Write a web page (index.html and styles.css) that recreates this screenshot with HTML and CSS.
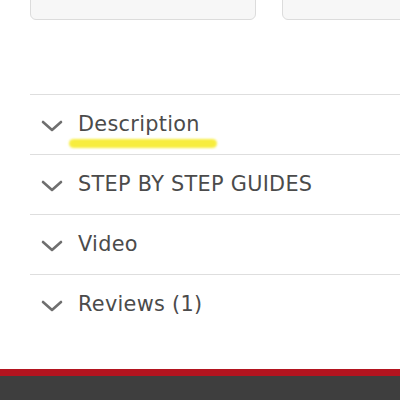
FILE: index.html
```html
<!DOCTYPE html>
<html lang="en">
<head>
<meta charset="utf-8">
<title>Product tabs</title>
<link rel="stylesheet" href="styles.css">
</head>
<body>
<div class="page">
  <div class="cards">
    <div class="card"></div>
    <div class="card"></div>
  </div>
  <div class="accordion">
    <div class="item">
      <svg class="chev" viewBox="0 0 22 12" width="22" height="12"><path d="M2 2 L11 10 L20 2" fill="none" stroke="#6f6f6f" stroke-width="2.6" stroke-linecap="round" stroke-linejoin="round"/></svg>
      <span class="label">Description</span>
      <span class="highlight"></span>
    </div>
    <div class="item">
      <svg class="chev" viewBox="0 0 22 12" width="22" height="12"><path d="M2 2 L11 10 L20 2" fill="none" stroke="#6f6f6f" stroke-width="2.6" stroke-linecap="round" stroke-linejoin="round"/></svg>
      <span class="label">STEP BY STEP GUIDES</span>
    </div>
    <div class="item">
      <svg class="chev" viewBox="0 0 22 12" width="22" height="12"><path d="M2 2 L11 10 L20 2" fill="none" stroke="#6f6f6f" stroke-width="2.6" stroke-linecap="round" stroke-linejoin="round"/></svg>
      <span class="label">Video</span>
    </div>
    <div class="item">
      <svg class="chev" viewBox="0 0 22 12" width="22" height="12"><path d="M2 2 L11 10 L20 2" fill="none" stroke="#6f6f6f" stroke-width="2.6" stroke-linecap="round" stroke-linejoin="round"/></svg>
      <span class="label">Reviews (1)</span>
    </div>
  </div>
</div>
<footer class="footer"></footer>
</body>
</html>
```
FILE: styles.css
```css
html, body {
  margin: 0;
  padding: 0;
  background: #ffffff;
  overflow: hidden;
}
body {
  width: 400px;
  height: 400px;
  display: flex;
  flex-direction: column;
  font-family: "DejaVu Sans", "Open Sans", sans-serif;
}
.page {
  padding-left: 30px;
  height: 369px;
  overflow: hidden;
}
.cards {
  display: flex;
  gap: 26px;
  margin-top: -21px;
}
.card {
  flex: 0 0 224px;
  height: 39px;
  background: #f7f7f7;
  border: 1px solid #dcdcdc;
  border-radius: 6px;
}
.accordion {
  margin-top: 74px;
}
.item {
  position: relative;
  height: 59px;
  border-top: 1px solid #dedede;
  display: flex;
  align-items: center;
  padding-left: 11px;
  gap: 15px;
}
.chev {
  flex: 0 0 22px;
  margin-top: 2px;
}
.label {
  position: relative;
  z-index: 1;
  font-size: 20.8px;
  letter-spacing: 0.3px;
  color: #4b4b4b;
  margin-top: -1px;
}
.highlight {
  position: absolute;
  left: 39px;
  top: 44px;
  width: 148px;
  height: 9px;
  border-radius: 5px;
  background: #f7ec2a;
  filter: blur(0.8px);
  opacity: 0.9;
}
.footer {
  flex: 1;
  border-top: 7px solid #b3141f;
  background: #3e3e3e;
}
```
